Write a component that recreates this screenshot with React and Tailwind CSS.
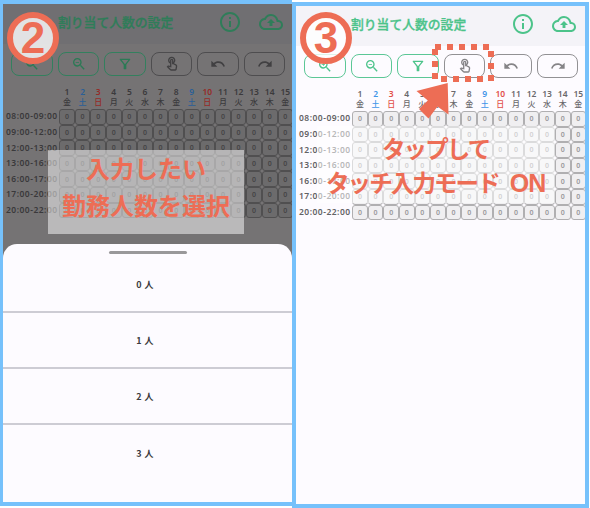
import {
  MdOutlineZoomIn,
  MdOutlineZoomOut,
  MdOutlineFilterAlt,
  MdOutlineTouchApp,
  MdUndo,
  MdRedo,
  MdOutlineInfo,
  MdOutlineBackup,
} from "react-icons/md";

const WEEK = ["金", "土", "日", "月", "火", "水", "木"];
const DAYS = Array.from({ length: 15 }, (_, i) => ({ n: i + 1, w: WEEK[i % 7] }));
const TIMES = [
  "08:00-09:00",
  "09:00-12:00",
  "12:00-13:00",
  "13:00-16:00",
  "16:00-17:00",
  "17:00-20:00",
  "20:00-22:00",
];

const TOOLS = [
  { Icon: MdOutlineZoomIn, on: true },
  { Icon: MdOutlineZoomOut, on: true },
  { Icon: MdOutlineFilterAlt, on: true },
  { Icon: MdOutlineTouchApp, on: false },
  { Icon: MdUndo, on: false },
  { Icon: MdRedo, on: false },
];

const LIGHT = {
  page: "bg-[#fdfbff]",
  header: "bg-[#f4f3f8] text-[#4cc38a]",
  toolOn: "border-[#5cc796] text-[#4cc38a]",
  toolOff: "border-[#929194] text-[#858487]",
  sat: "text-[#3f96e8]",
  sun: "text-[#e2504a]",
  day: "text-[#6a696c]",
  time: "text-[#626164]",
  cell: "border-[#b0afb1] bg-[#f0eff1] text-[#98979a]",
};

const DIM = {
  page: "bg-[#757374]",
  header: "bg-[#706f72] text-[#2f7d59]",
  toolOn: "border-[#33805e] text-[#2b7a55]",
  toolOff: "border-[#4e4d4f] text-[#414042]",
  sat: "text-[#2a5f97]",
  sun: "text-[#962b28]",
  day: "text-[#3b3a3c]",
  time: "text-[#3a393b]",
  cell: "border-[#504f50] bg-[#6c6b6c] text-[#444345]",
};

function Screen({ theme }) {
  const dayColor = (w) => (w === "土" ? theme.sat : w === "日" ? theme.sun : theme.day);
  return (
    <div className={"w-[293px] " + theme.page}>
      <header className={"flex h-[40px] items-center pl-[55px] " + theme.header}>
        <h1 className="-mt-[3px] w-[160px] whitespace-nowrap text-[12.8px] font-medium leading-none [-webkit-text-stroke:0.3px_currentColor]">
          割り当て人数の設定
        </h1>
        <MdOutlineInfo className="-mt-[4px] size-[24px] shrink-0" />
        <MdOutlineBackup className="-mt-[4px] ml-[17px] size-[24px] shrink-0" />
      </header>
      <div className="mt-[8px] flex gap-[4.8px] pl-[8.3px]">
        {TOOLS.map(({ Icon, on }, i) => (
          <div
            key={i}
            className={
              "flex h-[24px] w-[41.7px] shrink-0 items-center justify-center rounded-[8px] border " +
              (on ? theme.toolOn : theme.toolOff)
            }
          >
            <Icon className="size-[16px]" />
          </div>
        ))}
      </div>
      <div className="mt-[11px] flex pl-[56.2px]">
        {DAYS.map((d) => (
          <div
            key={d.n}
            className={
              "flex w-[15.6px] shrink-0 flex-col items-center text-[8px] leading-[10px] " +
              dayColor(d.w)
            }
          >
            <span className="font-['Noto_Sans',sans-serif] text-[8.5px] font-semibold">{d.n}</span>
            <span className="font-medium">{d.w}</span>
          </div>
        ))}
      </div>
      <div className="mt-[2px] flex flex-col">
        {TIMES.map((t) => (
          <div key={t} className="flex h-[15.6px] items-center">
            <span
              className={
                "w-[56.2px] shrink-0 whitespace-nowrap pl-[3px] font-['Noto_Sans',sans-serif] text-[8.5px] font-semibold tracking-[0.48px] " +
                theme.time
              }
            >
              {t}
            </span>
            {DAYS.map((d) => (
              <span
                key={d.n}
                className={
                  "flex h-[15.6px] w-[15.6px] shrink-0 items-center justify-center rounded-[3px] border font-['Noto_Sans',sans-serif] text-[7px] font-semibold leading-none " +
                  theme.cell
                }
              >
                0
              </span>
            ))}
          </div>
        ))}
      </div>
    </div>
  );
}

function StepBadge({ n }) {
  return (
    <div className="flex size-[52px] items-center justify-center rounded-full border-[6px] border-[#ed6d55] bg-white/80 font-['Liberation_Sans',sans-serif] text-[44px] font-bold leading-none text-[#ed6d55]">
      <span>{n}</span>
    </div>
  );
}

const DOTS = [
  [435, 44], [447, 44], [459, 44], [471, 44], [483, 44],
  [488, 51], [488, 63], [488, 75],
  [432, 49], [432, 61], [432, 73],
  [441, 76], [453, 76], [465, 76], [477, 76],
];

export default function App() {
  return (
    <div className="relative flex h-[508px] w-[590px] overflow-hidden bg-white font-['Noto_Sans_CJK_JP',sans-serif]">
      <section className="relative h-[506px] w-[292px] shrink-0 overflow-hidden border-b-4 border-l-[3px] border-t-4 border-[#76c1fb] bg-[#757374]">
        <Screen theme={DIM} />
        <div className="absolute left-[45px] top-[146px] flex h-[84px] w-[196px] flex-col items-center bg-white/50 text-[24px] font-bold leading-[36.5px] text-[#ed6d55]">
          <p>入力したい</p>
          <p className="whitespace-nowrap">勤務人数を選択</p>
        </div>
        <div className="absolute inset-x-0 bottom-0 top-[240px] rounded-t-[14px] bg-[#fdfbff]">
          <div className="ml-[106px] mt-[7px] h-[3px] w-[78px] rounded-full bg-[#99989a]" />
          <ul className="mt-[3px]">
            {[0, 1, 2, 3].map((n) => (
              <li
                key={n}
                className={
                  "flex h-[56px] items-center justify-center pr-[5px] pt-[1px] text-[9px] font-bold tracking-[0.4px] text-[#3c3b3e] " +
                  (n < 3 ? "border-b-2 border-[#cdccd4]" : "")
                }
              >
                {n} 人
              </li>
            ))}
          </ul>
        </div>
      </section>
      <section className="relative mt-[2px] h-[506px] w-[297px] shrink-0 overflow-hidden border-4 border-[#76c1fb] bg-[#fdfbff]">
        <Screen theme={LIGHT} />
        <div className="absolute left-[21px] top-[120px] h-[77px] w-[238px] bg-white/55" />
      </section>

      <div className="absolute left-[7px] top-[12px]">
        <StepBadge n={2} />
      </div>
      <div className="absolute left-[300px] top-[12px]">
        <StepBadge n={3} />
      </div>
      <svg
        className="absolute left-0 top-0"
        width="590"
        height="130"
        viewBox="0 0 590 130"
        fill="#ed6d55"
      >
        {DOTS.map(([x, y]) => (
          <rect key={x + "-" + y} x={x} y={y} width="6" height="6" />
        ))}
        <path d="M447.7 83 416.5 91 427.8 100.5 419 109 428.5 118.5 437.5 106.5 448.5 114.5Z" />
      </svg>
      <p className="absolute left-[382px] top-[131px] whitespace-nowrap text-[23.5px] font-bold leading-[34px] tracking-[-1.9px] text-[#ed6d55]">
        タップして
      </p>
      <p className="absolute left-[326px] top-[165px] whitespace-nowrap text-[23.5px] font-bold leading-[34px] tracking-[-1.9px] text-[#ed6d55]">
        タッチ入力モード
        <span className="ml-[11px] font-['Liberation_Sans',sans-serif] text-[25px] tracking-[-1px]">ON</span>
      </p>
    </div>
  );
}
